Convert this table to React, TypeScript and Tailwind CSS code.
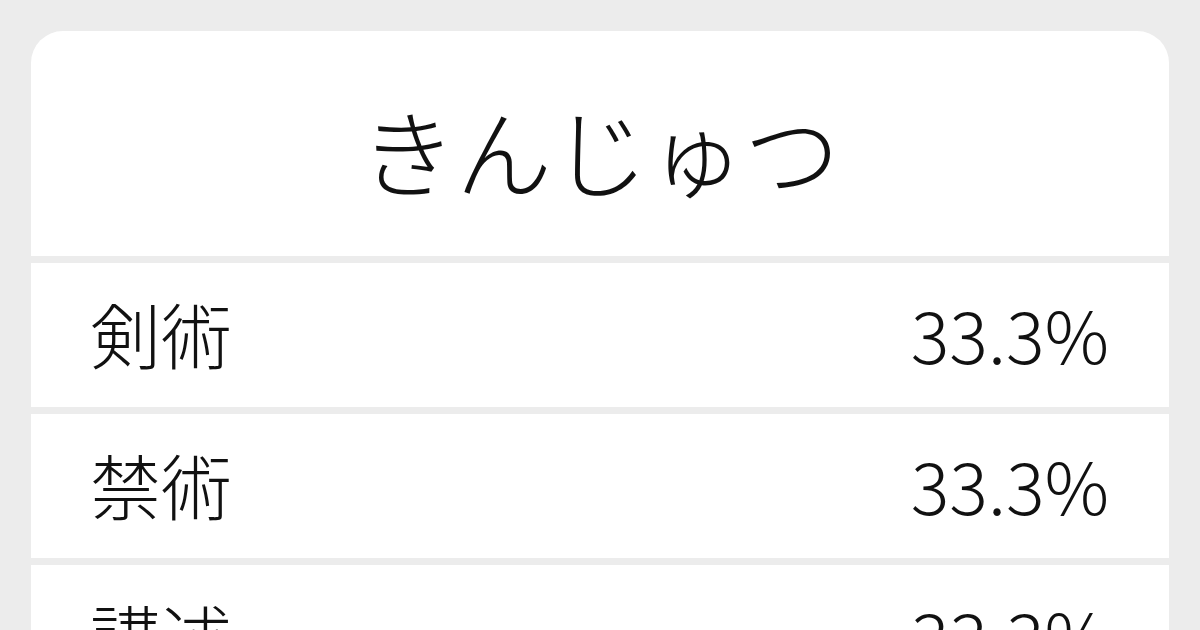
import React from 'react';

const rows = [
  { word: '剣術', rate: '33.3%' },
  { word: '禁術', rate: '33.3%' },
  { word: '講述', rate: '33.3%' },
];

const font = { fontFamily: '"Noto Sans CJK JP", "Noto Sans", sans-serif' };

export default function App() {
  return (
    <div className="w-[1200px] h-[630px] overflow-hidden bg-[#ececec] pt-[31px] px-[31px]" style={font}>
      <div className="rounded-[32px] overflow-hidden bg-[#ececec] flex flex-col gap-[7px] text-[#111]">
        <div className="h-[225px] bg-white flex items-center justify-center pt-[11px]">
          <h1 className="text-[96px] font-light leading-none">きんじゅつ</h1>
        </div>
        {rows.map(r => (
          <div key={r.word} className="h-[144px] shrink-0 bg-white flex items-center justify-between pl-[59px] pr-[60px] pb-[5px]">
            <span className="text-[71px] font-light leading-none">{r.word}</span>
            <span className="text-[72px] font-light leading-none">{r.rate}</span>
          </div>
        ))}
      </div>
    </div>
  );
}
